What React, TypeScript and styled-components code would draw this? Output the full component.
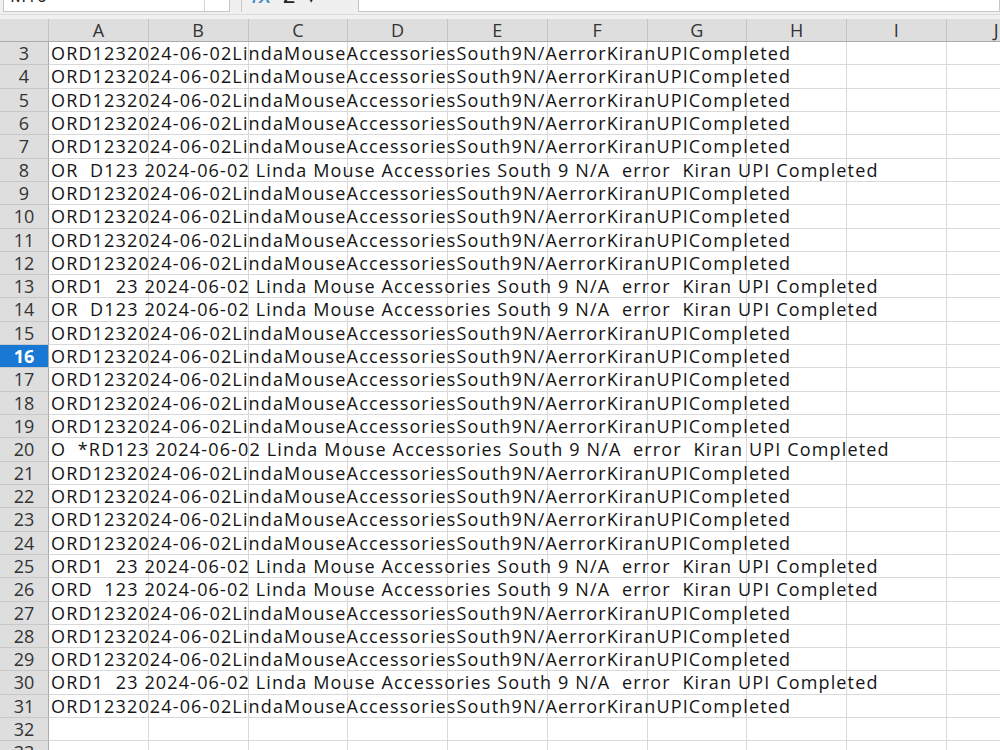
import React from 'react'
import styled, { createGlobalStyle } from 'styled-components'

const GlobalStyle = createGlobalStyle`
  html, body {
    margin: 0;
    padding: 0;
    background: #ffffff;
    overflow: hidden;
  }
  body {
    font-family: 'Open Sans', 'Liberation Sans', sans-serif;
  }
`

const colors = {
  chrome: '#f0f0f0',
  header: '#dedede',
  headerLine: '#ababab',
  grid: '#d9d9d9',
  text: '#141414',
  headText: '#333333',
  selected: '#1878d4',
  fx: '#3a86c8',
}

const COLS = 'A B C D E F G H I J'.split(' ')
const GRID = `49px repeat(${COLS.length}, 99.75px)`

const Page = styled.div`
  width: 1000px;
  height: 750px;
  overflow: hidden;
  display: flex;
  flex-direction: column;
  background: #fff;
`

const FormulaBar = styled.div`
  height: 14px;
  flex: none;
  display: flex;
  align-items: flex-end;
  overflow: hidden;
  background: ${colors.chrome};
  padding: 0 0 2px 3px;
  box-sizing: border-box;
`

const NameBox = styled.div`
  width: 227px;
  height: 26px;
  flex: none;
  display: flex;
  background: #fff;
  border: 1px solid #c6c6c6;
  box-sizing: border-box;
`

const NameText = styled.div`
  flex: 1;
  padding: 0 6px;
  font-size: 18px;
  line-height: 16px;
  color: #222;
`

const NameDrop = styled.div`
  width: 24px;
  border-left: 1px solid #d6d6d6;
`

const Divider = styled.div`
  width: 1px;
  height: 20px;
  margin: 0 9px 0 11px;
  background: #c8c8c8;
`

const ToolIcon = styled.div<{ $color?: string; $italic?: boolean; $size?: number }>`
  height: 26px;
  margin-right: 10px;
  font-size: ${({ $size }) => $size || 22}px;
  line-height: 20px;
  font-family: 'DejaVu Sans', sans-serif;
  font-style: ${({ $italic }) => ($italic ? 'italic' : 'normal')};
  color: ${({ $color }) => $color || '#222'};
`

const FormulaInput = styled.div`
  flex: 1;
  height: 26px;
  background: #fff;
  border: 1px solid #c6c6c6;
  box-sizing: border-box;
`

const Spacer = styled.div`
  height: 5px;
  flex: none;
  background: ${colors.chrome};
  border-top: 1px solid #dadada;
  box-sizing: border-box;
`

const HeaderRow = styled.div`
  height: 22px;
  flex: none;
  display: grid;
  grid-template-columns: ${GRID};
  background: ${colors.header};
  border-bottom: 1px solid ${colors.headerLine};
  box-sizing: content-box;
`

const ColHead = styled.div`
  border-right: 1px solid #c4c4c4;
  font-size: 18px;
  line-height: 22px;
  text-align: center;
  color: ${colors.headText};
`

const Row = styled.div`
  height: 23.32px;
  flex: none;
  display: grid;
  grid-template-columns: ${GRID};
  box-sizing: border-box;
`

const RowHead = styled.div<{ $selected?: boolean }>`
  background: ${({ $selected }) => ($selected ? colors.selected : colors.header)};
  color: ${({ $selected }) => ($selected ? '#fff' : colors.headText)};
  font-weight: ${({ $selected }) => ($selected ? 700 : 400)};
  border-right: 1px solid ${colors.headerLine};
  border-bottom: 1px solid #c8c8c8;
  font-size: 18px;
  line-height: 22px;
  text-align: center;
  box-sizing: border-box;
`

const Cell = styled.div`
  position: relative;
  border-right: 1px solid ${colors.grid};
  border-bottom: 1px solid ${colors.grid};
  box-sizing: border-box;
`

const CellText = styled.span`
  position: absolute;
  left: 2px;
  top: 0;
  white-space: pre;
  font-size: 18px;
  font-weight: 500;
  letter-spacing: 1.15px;
  line-height: 22px;
  color: ${colors.text};
  z-index: 1;
`

const JOINED = 'ORD1232024-06-02LindaMouseAccessoriesSouth9N/AerrorKiranUPICompleted'
const spaced = (id: string) =>
  `${id} 2024-06-02 Linda Mouse Accessories South 9 N/A  error  Kiran UPI Completed`

const rows: { n: number; text?: string }[] = []
for (let n = 3; n <= 33; n++) {
  let text: string | undefined = JOINED
  if (n === 8 || n === 14) text = spaced('OR  D123')
  if (n === 13 || n === 25 || n === 30) text = spaced('ORD1  23')
  if (n === 26) text = spaced('ORD  123')
  if (n === 20) text = spaced('O  *RD123')
  if (n > 31) text = undefined
  rows.push({ n, text })
}

const App = (): JSX.Element => {
  return (
    <Page>
      <GlobalStyle />
      <FormulaBar>
        <NameBox>
          <NameText>M16</NameText>
          <NameDrop />
        </NameBox>
        <Divider />
        <ToolIcon $color={colors.fx} $italic>fx</ToolIcon>
        <ToolIcon>Σ</ToolIcon>
        <ToolIcon $size={14}>▼</ToolIcon>
        <ToolIcon>—</ToolIcon>
        <FormulaInput />
      </FormulaBar>
      <Spacer />
      <HeaderRow>
        <ColHead />
        {COLS.map((c) => (
          <ColHead key={c}>{c}</ColHead>
        ))}
      </HeaderRow>
      {rows.map((r) => (
        <Row key={r.n}>
          <RowHead $selected={r.n === 16}>{r.n}</RowHead>
          {COLS.map((c, i) => (
            <Cell key={c}>
              {i === 0 && r.text && <CellText>{r.text}</CellText>}
            </Cell>
          ))}
        </Row>
      ))}
    </Page>
  )
}

export default App
